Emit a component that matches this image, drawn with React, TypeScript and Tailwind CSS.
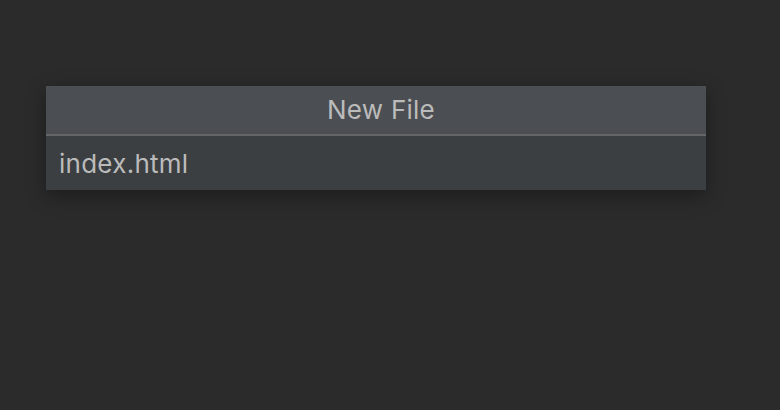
export default function App() {
  return (
    <div className="h-[410px] w-[780px] bg-[#2b2b2b] pt-[86px] pl-[46px]" style={{ fontFamily: 'Inter, "Open Sans", sans-serif' }}>
      <div className="w-[660px] shadow-[0_6px_18px_rgba(0,0,0,0.35)]">
        {/* Title */}
        <div className="flex h-[48px] items-center justify-center bg-[#4b4e52] pb-[2px] pl-[10px] text-[26px] tracking-[0.01em] text-[#bbbbbb]">
          New File
        </div>
        <div className="h-[2px] bg-[#646566]" />
        {/* Input */}
        <div className="flex h-[54px] items-center bg-[#3c3f41] pl-[13px] text-[26px] tracking-[0.01em] text-[#bbbbbb]">
          index.html
        </div>
      </div>
    </div>
  )
}
